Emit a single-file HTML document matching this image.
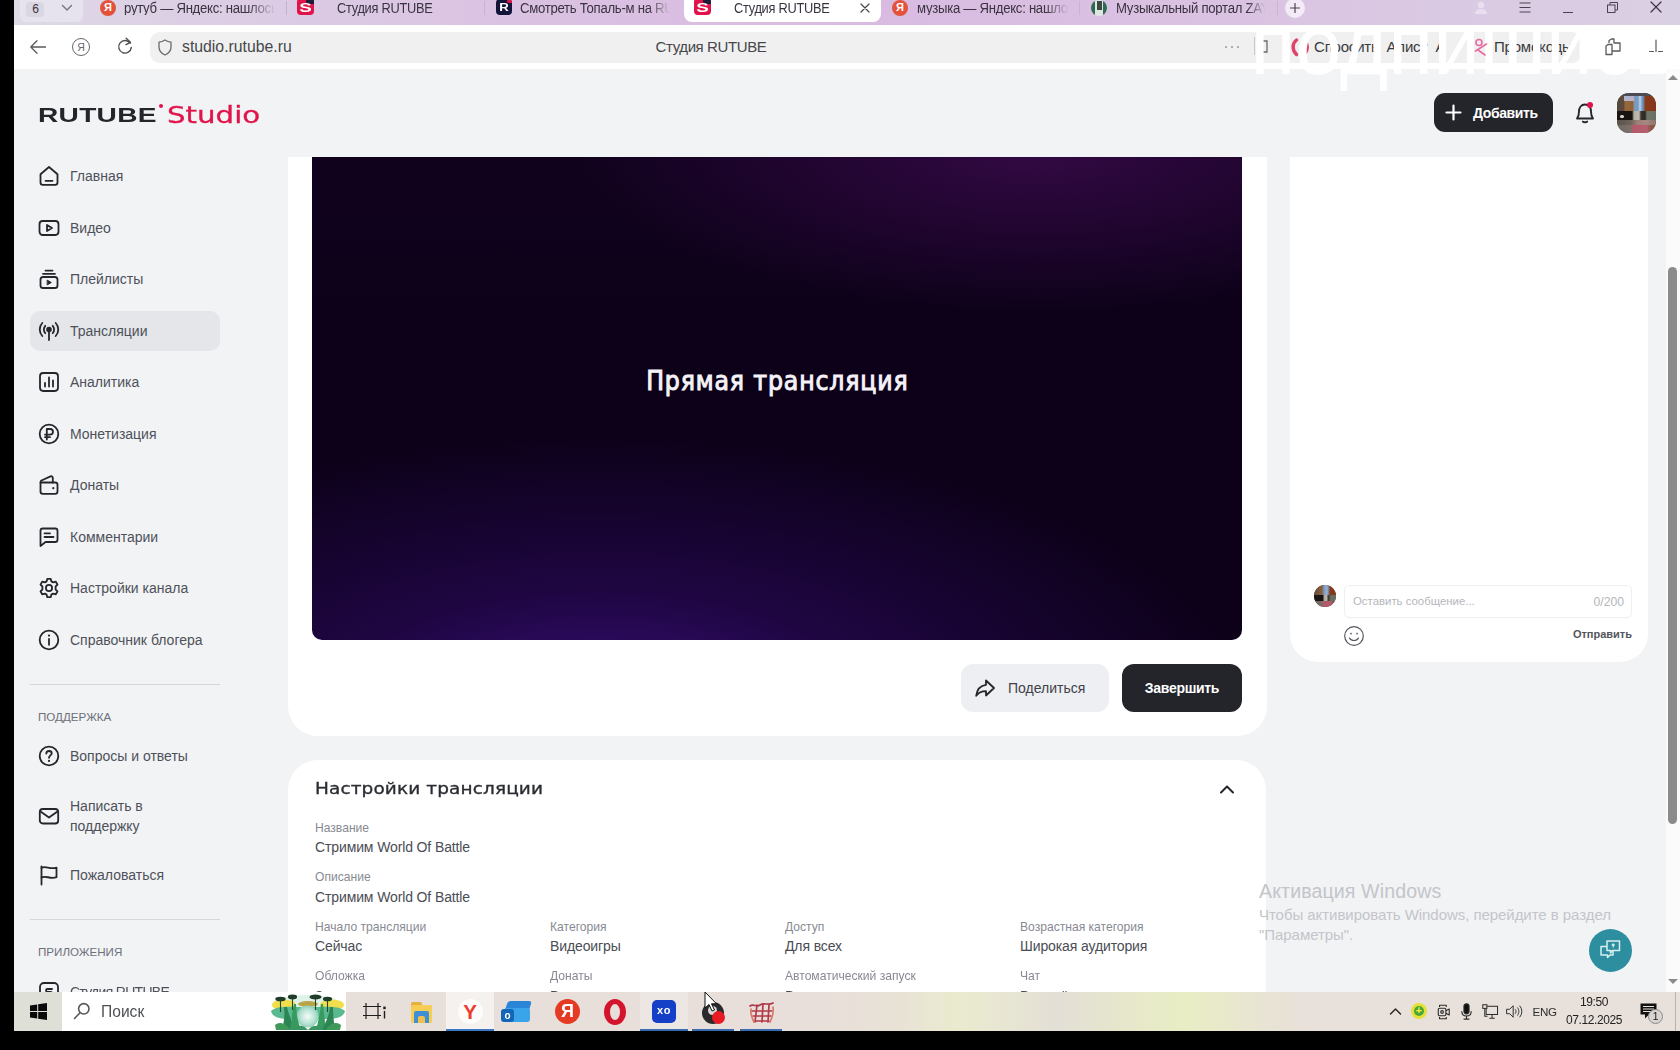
<!DOCTYPE html>
<html lang="ru"><head><meta charset="utf-8"><title>Студия RUTUBE</title>
<style>
*{box-sizing:border-box;margin:0;padding:0}
html,body{width:1680px;height:1050px;overflow:hidden;background:#000;font-family:"Liberation Sans",sans-serif;}
.abs,.abs *{position:absolute}
#screen{position:absolute;left:14px;top:0;width:1666px;height:1031px;background:#f2f3f5;overflow:hidden}
/* everything inside #screen positioned in page coordinates via wrapper shift */
#w{position:absolute;left:-14px;top:0;width:1680px;height:1031px;filter:blur(0.4px)}
#w div,#w span,#w svg{position:absolute}
.t{white-space:nowrap;line-height:1}
/* tab bar */
#tabbar{left:14px;top:0;width:1666px;height:25px;background:linear-gradient(90deg,#dedae6 0%,#dccfe5 10%,#dac1e2 32%,#d9bbe1 52%,#dac2e2 72%,#dad0e3 100%)}
#toolbar{left:14px;top:25px;width:1666px;height:44px;background:#fff}
#urlpill{left:150px;top:32px;width:1432px;height:31px;background:#f0f0f0;border-radius:10px}
.tabt{font-size:14px;color:#3a3340;top:1px;letter-spacing:-0.3px;transform:scaleX(.94);transform-origin:0 0}
/* sidebar */
.nav{font-size:14px;color:#4e515a;left:70px}
.ic{left:37.3px;width:24px;height:24px;fill:none;stroke:#24262c;stroke-width:1.8;stroke-linecap:round;stroke-linejoin:round}
.sec{font-size:11.6px;color:#6d7079;left:38px;letter-spacing:0}
.hr{left:30px;width:190px;height:1px;background:#d5d7db}
/* cards */
.card{background:#fff;border-radius:30px}
.lbl{font-size:12.1px;color:#878a92}
.val{font-size:14px;color:#4a4d55;letter-spacing:-0.12px}
</style></head><body>
<div id="screen"><div id="w">

<!-- ===== browser chrome ===== -->
<div id="tabbar"></div>
<div id="toolbar"></div>
<div id="urlpill"></div>

<!-- ===== page ===== -->
<div id="page" style="left:14px;top:69px;width:1652px;height:923px;background:#f2f3f5"></div>


<!-- ===== browser chrome content ===== -->
<div style="left:20px;top:0;width:63px;height:22px;background:#e6e2ee;border-radius:0 0 6px 6px"></div><div style="left:26px;top:2px;width:18px;height:15px;background:#dad6e2;border-radius:4px"></div>
<div class="t" style="left:21px;width:29px;text-align:center;top:3px;font-size:12px;color:#3a3340">6</div>
<svg style="left:61px;top:4px;width:12px;height:8px" viewBox="0 0 12 8" fill="none" stroke="#7a6f85" stroke-width="1.4" stroke-linecap="round" stroke-linejoin="round"><path d="M1.5 1.5 L6 6 L10.5 1.5"/></svg>
<div style="left:100px;top:0;width:16px;height:16px;border-radius:50%;background:#e5523c"></div><div class="t" style="left:100px;width:16px;text-align:center;top:2px;font-size:11px;font-weight:bold;color:#fff">Я</div>
<div class="t tabt" style="left:124px;width:161px;overflow:hidden;-webkit-mask-image:linear-gradient(90deg,#000 82%,transparent 100%)">рутуб — Яндекс: нашлось</div>
<div style="left:286px;top:1px;width:1px;height:14px;background:#c9b3d2"></div>
<div style="left:297px;top:-2px;width:17px;height:17px;border-radius:4px;background:#e0134a"></div><div style="left:306px;top:-2px;width:8px;height:6px;background:#1b1b3a;border-radius:0 4px 0 3px"></div><div class="t" style="left:297px;width:17px;text-align:center;top:1.8px;font-size:12.5px;font-weight:bold;color:#fff;transform:scaleX(1.5)">S</div>
<div class="t tabt" style="left:337px;transform:scaleX(.915)">Студия RUTUBE</div>
<div style="left:484px;top:1px;width:1px;height:14px;background:#c9b3d2"></div>
<div style="left:496px;top:-1px;width:16px;height:16px;border-radius:4px;background:#14143a"></div><div style="left:507px;top:-1px;width:5px;height:4px;border-radius:0 4px 0 2px;background:#e0134a"></div><div class="t" style="left:496px;width:16px;text-align:center;top:2px;font-size:11px;font-weight:bold;color:#fff;transform:scaleX(1.2)">R</div>
<div class="t tabt" style="left:520px;width:160px;overflow:hidden;-webkit-mask-image:linear-gradient(90deg,#000 85%,transparent 100%)">Смотреть Топаль-м на RU</div>
<div style="left:684px;top:0;width:197px;height:22px;background:#fff;border-radius:0 0 8px 8px"></div>
<div style="left:694px;top:-2px;width:17px;height:17px;border-radius:4px;background:#e0134a"></div><div style="left:703px;top:-2px;width:8px;height:6px;background:#1b1b3a;border-radius:0 4px 0 3px"></div><div class="t" style="left:694px;width:17px;text-align:center;top:1.8px;font-size:12.5px;font-weight:bold;color:#fff;transform:scaleX(1.5)">S</div>
<div class="t tabt" style="left:734px;transform:scaleX(.915)">Студия RUTUBE</div>
<svg style="left:860px;top:3px;width:10px;height:10px" viewBox="0 0 10 10" stroke="#4a4450" stroke-width="1.2" stroke-linecap="round"><path d="M1 1 L9 9 M9 1 L1 9"/></svg>
<div style="left:892px;top:0;width:16px;height:16px;border-radius:50%;background:#e5523c"></div><div class="t" style="left:892px;width:16px;text-align:center;top:2px;font-size:11px;font-weight:bold;color:#fff">Я</div>
<div class="t tabt" style="left:917px;width:161px;overflow:hidden;-webkit-mask-image:linear-gradient(90deg,#000 85%,transparent 100%)">музыка — Яндекс: нашлось</div>
<div style="left:1079px;top:1px;width:1px;height:14px;background:#c9b3d2"></div>
<div style="left:1091px;top:0;width:16px;height:16px;border-radius:50%;background:#dfe6e2;overflow:hidden"><div style="left:0;top:0;width:4px;height:16px;background:#2f6b52"></div><div style="left:12px;top:0;width:4px;height:16px;background:#2f6b52"></div><div style="left:6px;top:1px;width:5px;height:9px;background:#3a4a44"></div></div>
<div class="t tabt" style="left:1116px;width:159px;overflow:hidden;-webkit-mask-image:linear-gradient(90deg,#000 88%,transparent 100%)">Музыкальный портал ZAYCEV</div>
<div style="left:1277px;top:1px;width:1px;height:14px;background:#c9b3d2"></div>
<div style="left:1285px;top:-2px;width:20px;height:20px;border-radius:50%;background:#f3ecf6"></div>
<svg style="left:1290px;top:3px;width:10px;height:10px" viewBox="0 0 10 10" stroke="#4a4450" stroke-width="1.2" stroke-linecap="round"><path d="M5 0.5 V9.5 M0.5 5 H9.5"/></svg>
<svg style="left:1474px;top:0;width:14px;height:15px" viewBox="0 0 14 15" fill="#e9dff0"><circle cx="7" cy="5" r="3.2"/><path d="M1 14 C1 10 4 9 7 9 C10 9 13 10 13 14 Z"/></svg>
<svg style="left:1519px;top:2px;width:12px;height:11px" viewBox="0 0 12 11" stroke="#4a4450" stroke-width="1.1"><path d="M0.5 1 H11.5 M0.5 5.5 H11.5 M0.5 10 H11.5"/></svg>
<div style="left:1563px;top:12px;width:10px;height:1px;background:#4a4450"></div>
<svg style="left:1607px;top:2px;width:11px;height:11px" viewBox="0 0 11 11" fill="none" stroke="#4a4450" stroke-width="1"><rect x="0.5" y="3" width="7.5" height="7.5"/><path d="M3 3 V0.5 H10.5 V8 H8"/></svg>
<svg style="left:1650px;top:1px;width:12px;height:12px" viewBox="0 0 12 12" stroke="#3a3340" stroke-width="1.2" stroke-linecap="round"><path d="M1 1 L11 11 M11 1 L1 11"/></svg>

<svg style="left:29px;top:39px;width:18px;height:16px" viewBox="0 0 18 16" fill="none" stroke="#5a5a5e" stroke-width="1.3" stroke-linecap="round" stroke-linejoin="round"><path d="M16.5 8 H2 M8 1.8 L1.8 8 L8 14.2"/></svg>
<div style="left:72px;top:38px;width:18px;height:18px;border-radius:50%;border:1.4px solid #66666a"></div>
<div class="t" style="left:72px;width:18px;text-align:center;top:42px;font-size:10.5px;color:#66666a">Я</div>
<svg style="left:116px;top:37px;width:18px;height:19px" viewBox="0 0 18 19" fill="none" stroke="#4e4e52" stroke-width="1.4" stroke-linecap="round" stroke-linejoin="round"><path d="M14.2 6.2 A6.3 6.3 0 1 0 15.3 10.4"/><path d="M10.2 1.3 L14.4 5.3 L10 7.6"/></svg>
<svg style="left:158px;top:39px;width:14px;height:17px" viewBox="0 0 14 17" fill="none" stroke="#6a6a6e" stroke-width="1.3" stroke-linejoin="round"><path d="M7 1 C5 2.4 3 3 1 3.1 V8 C1 12 3.8 14.6 7 16 C10.2 14.6 13 12 13 8 V3.1 C11 3 9 2.4 7 1 Z"/></svg>
<div class="t" style="left:182px;top:38.5px;font-size:15.8px;color:#47474b;letter-spacing:0">studio.rutube.ru</div>
<div class="t" style="left:611px;width:200px;text-align:center;top:39px;font-size:15px;color:#47474b;letter-spacing:-0.4px">Студия RUTUBE</div>
<div style="left:1225px;top:46px;width:2.4px;height:2.4px;border-radius:50%;background:#9a9a9e;box-shadow:6px 0 0 #9a9a9e,12px 0 0 #9a9a9e"></div>
<div style="left:1254px;top:37px;width:1px;height:18px;background:#c8c8cc"></div>
<div style="left:1641px;top:33px;width:1px;height:32px;background:#e6e6e8"></div>
<svg style="left:1262px;top:40px;width:6px;height:13px" viewBox="0 0 6 13" fill="none" stroke="#6a6a6e" stroke-width="1.3"><path d="M0.5 1 H5 V12 H0.5"/></svg>
<svg style="left:1290px;top:38px;width:20px;height:19px" viewBox="0 0 20 19" fill="none" stroke="#e04368" stroke-width="3.4" stroke-linecap="round"><path d="M6.5 2 C2 5.5 2 12.5 6.5 16.5"/><path d="M16 4.5 C18 8 17.5 12 15 15.5"/></svg>
<div class="t" style="left:1314px;top:39px;font-size:15px;color:#3a3a3e;letter-spacing:-0.2px">Спросить&nbsp; Алису &nbsp;А</div>
<svg style="left:1474px;top:38px;width:14px;height:18px;z-index:7" viewBox="0 0 14 18" fill="none" stroke="#e86aa0" stroke-width="1.6" stroke-linecap="round"><circle cx="5" cy="4.5" r="3"/><path d="M12.5 6 L1.5 13"/><path d="M4 12 L11 17"/></svg>
<div class="t" style="left:1494px;top:39px;font-size:15px;color:#3a3a3e;letter-spacing:-0.2px">Промокоды</div>
<svg style="left:1604px;top:38px;width:18px;height:18px;z-index:7" viewBox="0 0 18 18" fill="none" stroke="#5a5a5e" stroke-width="1.3" stroke-linejoin="round"><path d="M5 5 V2.5 L7.5 1 H10 V5 H16 V13 H8"/><path d="M2 8 L4 6.5 H8 V16.5 H2 Z"/></svg>
<svg style="left:1648px;top:38px;width:16px;height:16px;z-index:7" viewBox="0 0 16 16" fill="none" stroke="#5a5a5e" stroke-width="1.2" stroke-linecap="round"><path d="M8 2 V10 M1.5 13.5 H5.5 M10.5 13.5 H14.5 M8 10 V13.5"/></svg>
<div class="t" id="sub" style="left:1250.5px;top:4px;font-size:83px;color:#fff;letter-spacing:0;z-index:6">подпишись</div>


<!-- ===== sidebar ===== -->
<div style="left:30px;top:311px;width:190px;height:40px;border-radius:10px;background:#e4e6ea"></div>
<svg class="ic" style="top:164px" viewBox="0 0 24 24"><path d="M3.5 10.2 L12 3 L20.5 10.2 V18.5 C20.5 19.9 19.6 20.8 18.2 20.8 H5.8 C4.4 20.8 3.5 19.9 3.5 18.5 Z"/><path d="M8.5 16.8 H15.5"/></svg><div class="t nav" style="top:169px">Главная</div>
<svg class="ic" style="top:216px" viewBox="0 0 24 24"><rect x="2.5" y="5" width="19" height="14" rx="3.2"/><path d="M10 9 L15 12 L10 15 Z"/></svg><div class="t nav" style="top:221px">Видео</div>
<svg class="ic" style="top:267px" viewBox="0 0 24 24"><rect x="3.5" y="10" width="17" height="11" rx="2.6"/><path d="M6 6.8 H18"/><path d="M8.5 3.6 H15.5"/><path d="M10.5 13.3 L14.3 15.5 L10.5 17.7 Z" fill="#24262c" stroke-width="1"/></svg><div class="t nav" style="top:272px">Плейлисты</div>
<svg class="ic" style="top:319px" viewBox="0 0 24 24"><circle cx="12" cy="10.5" r="1.9" fill="#24262c"/><path d="M12 12.5 V21"/><path d="M8.3 6.8 C6.4 8.8 6.4 12.2 8.3 14.2"/><path d="M15.7 6.8 C17.6 8.8 17.6 12.2 15.7 14.2"/><path d="M5.3 4 C1.9 7.6 1.9 13.4 5.3 17"/><path d="M18.7 4 C22.1 7.6 22.1 13.4 18.7 17"/></svg><div class="t nav" style="top:324px">Трансляции</div>
<svg class="ic" style="top:370px" viewBox="0 0 24 24"><rect x="3" y="3" width="18" height="18" rx="3.2"/><path d="M8 16.5 V13"/><path d="M12 16.5 V7.5"/><path d="M16 16.5 V10.5"/></svg><div class="t nav" style="top:375px">Аналитика</div>
<svg class="ic" style="top:422px" viewBox="0 0 24 24"><circle cx="12" cy="12" r="9.3"/><path d="M9.8 17.5 V7 H13 C14.8 7 16 8.1 16 9.8 C16 11.5 14.8 12.6 13 12.6 H8"/><path d="M8 15.2 H13"/></svg><div class="t nav" style="top:427px">Монетизация</div>
<svg class="ic" style="top:473px" viewBox="0 0 24 24"><path d="M3.5 9.5 H18.2 C19.6 9.5 20.5 10.4 20.5 11.8 V18.5 C20.5 19.9 19.6 20.8 18.2 20.8 H5.8 C4.4 20.8 3.5 19.9 3.5 18.5 Z"/><path d="M3.5 9.5 C3.5 8.3 4 7.6 5 7.2 L13.5 3.4 C14.7 2.9 15.8 3.6 15.8 4.9 V9.5"/><circle cx="16.3" cy="15.2" r="1.1" fill="#24262c" stroke="none"/></svg><div class="t nav" style="top:478px">Донаты</div>
<svg class="ic" style="top:525px" viewBox="0 0 24 24"><path d="M3.5 5.8 C3.5 4.4 4.4 3.5 5.8 3.5 H18.2 C19.6 3.5 20.5 4.4 20.5 5.8 V14.7 C20.5 16.1 19.6 17 18.2 17 H8.5 L3.5 21 Z"/><path d="M7.5 8.3 H13"/><path d="M7.5 12 H16.5"/></svg><div class="t nav" style="top:530px">Комментарии</div>
<svg class="ic" style="top:576px" viewBox="0 0 24 24"><circle cx="12" cy="12" r="3.1"/><path d="M10.3 2.8 H13.7 L14.4 5.4 L16.2 6.4 L18.8 5.7 L20.5 8.6 L18.6 10.5 V13.5 L20.5 15.4 L18.8 18.3 L16.2 17.6 L14.4 18.6 L13.7 21.2 H10.3 L9.6 18.6 L7.8 17.6 L5.2 18.3 L3.5 15.4 L5.4 13.5 V10.5 L3.5 8.6 L5.2 5.7 L7.8 6.4 L9.6 5.4 Z"/></svg><div class="t nav" style="top:581px">Настройки канала</div>
<svg class="ic" style="top:628px" viewBox="0 0 24 24"><circle cx="12" cy="12" r="9.3"/><path d="M12 11 V16.8"/><circle cx="12" cy="7.6" r="1.1" fill="#24262c" stroke="none"/></svg><div class="t nav" style="top:633px">Справочник блогера</div>
<div class="hr" style="top:684px"></div>
<div class="t sec" style="top:711px">ПОДДЕРЖКА</div>
<svg class="ic" style="top:744px" viewBox="0 0 24 24"><circle cx="12" cy="12" r="9.3"/><path d="M9.3 9.6 C9.3 8 10.5 7 12 7 C13.6 7 14.7 8 14.7 9.4 C14.7 11.4 12 11.5 12 13.8"/><circle cx="12" cy="16.9" r="1.1" fill="#24262c" stroke="none"/></svg><div class="t nav" style="top:749px">Вопросы и ответы</div>
<svg class="ic" style="top:804px" viewBox="0 0 24 24"><rect x="2.8" y="5" width="18.4" height="14.5" rx="3"/><path d="M3.5 7.5 L12 13.5 L20.5 7.5"/></svg><div class="t nav" style="top:799px">Написать в</div><div class="t nav" style="top:819px">поддержку</div>
<svg class="ic" style="top:863px" viewBox="0 0 24 24"><path d="M4.5 3.5 V21.5"/><path d="M4.5 4.8 C9 2.6 13 6.8 19.5 4.6 V14.2 C13 16.4 9 12.2 4.5 14.4"/></svg><div class="t nav" style="top:868px">Пожаловаться</div>
<div class="hr" style="top:919px"></div>
<div class="t sec" style="top:946px">ПРИЛОЖЕНИЯ</div>
<svg class="ic" style="top:980px" viewBox="0 0 24 24"><rect x="3" y="3" width="18" height="18" rx="4"/><path d="M15 9 H10.5 C9.4 9 9 9.6 9 10.4 C9 11.3 9.5 11.8 10.5 11.8 H13.5 C14.5 11.8 15 12.4 15 13.3 C15 14.2 14.5 14.8 13.5 14.8 H9"/></svg><div class="t nav" style="top:985px;letter-spacing:-0.7px">Студия RUTUBE</div>


<!-- ===== main column ===== -->
<div class="card" style="left:288px;top:100px;width:978.5px;height:635.7px"></div>
<div id="video" style="left:312px;top:120px;width:930px;height:520px;border-radius:0 0 10px 10px;background:
radial-gradient(ellipse 640px 270px at 31% 112%, rgba(56,14,122,.95), rgba(42,9,92,.6) 42%, rgba(20,2,40,0) 100%),
radial-gradient(ellipse 460px 160px at 78% 6%, rgba(56,10,74,.85), rgba(32,4,48,0) 100%),
linear-gradient(180deg,#11021e 0%,#0c0118 50%,#0d011a 100%)"></div>
<div class="t" style="left:312px;width:930px;top:367.6px;text-align:center;font-family:'DejaVu Sans Condensed','DejaVu Sans','Liberation Sans',sans-serif;font-size:26.3px;color:#f4f2f7;letter-spacing:0.85px;-webkit-text-stroke:0.95px #f4f2f7;padding-left:0.85px">Прямая трансляция</div>

<div style="left:961px;top:664px;width:148px;height:48px;border-radius:12px;background:#eeeff2"></div>
<svg style="left:973px;top:676px;width:24px;height:24px" viewBox="0 0 24 24" fill="none" stroke="#24262c" stroke-width="1.8" stroke-linejoin="round" stroke-linecap="round"><path d="M13 4.5 L21 12 L13 19.5 V15.2 C8.5 15.2 5.5 16.6 3.2 19.8 C3.9 14 7 9.6 13 8.8 Z"/></svg>
<div class="t" style="left:1008px;top:681px;font-size:14px;color:#3f424a">Поделиться</div>
<div style="left:1122px;top:664px;width:120px;height:48px;border-radius:12px;background:#23252b"></div>
<div class="t" style="left:1122px;width:120px;text-align:center;top:681px;font-size:14px;font-weight:bold;color:#fff;letter-spacing:-0.3px">Завершить</div>

<div class="card" style="left:288px;top:760px;width:978px;height:300px"></div>
<div class="t" id="h2" style="left:315px;top:781.2px;font-family:'DejaVu Sans','Liberation Sans',sans-serif;font-size:16.5px;color:#2b2d33;letter-spacing:0.1px;transform-origin:0 0;transform:scaleX(1.12);-webkit-text-stroke:0.35px #2b2d33">Настройки трансляции</div>
<svg style="left:1217px;top:779px;width:20px;height:20px" viewBox="0 0 20 20" fill="none" stroke="#24262c" stroke-width="2" stroke-linecap="round" stroke-linejoin="round"><path d="M4 13.5 L10 7.5 L16 13.5"/></svg>

<div class="t lbl" style="left:315px;top:822px">Название</div>
<div class="t val" style="left:315px;top:840px">Стримим World Of Battle</div>
<div class="t lbl" style="left:315px;top:871px">Описание</div>
<div class="t val" style="left:315px;top:890px">Стримим World Of Battle</div>

<div class="t lbl" style="left:315px;top:921px">Начало трансляции</div>
<div class="t val" style="left:315px;top:939px">Сейчас</div>
<div class="t lbl" style="left:550px;top:921px">Категория</div>
<div class="t val" style="left:550px;top:939px">Видеоигры</div>
<div class="t lbl" style="left:785px;top:921px">Доступ</div>
<div class="t val" style="left:785px;top:939px">Для всех</div>
<div class="t lbl" style="left:1020px;top:921px">Возрастная категория</div>
<div class="t val" style="left:1020px;top:939px">Широкая аудитория</div>

<div class="t lbl" style="left:315px;top:970px">Обложка</div>
<div class="t val" style="left:315px;top:989px">Загружена</div>
<div class="t lbl" style="left:550px;top:970px">Донаты</div>
<div class="t val" style="left:550px;top:989px">Выключены</div>
<div class="t lbl" style="left:785px;top:970px">Автоматический запуск</div>
<div class="t val" style="left:785px;top:989px">Выключен</div>
<div class="t lbl" style="left:1020px;top:970px">Чат</div>
<div class="t val" style="left:1020px;top:989px">Включён</div>


<!-- ===== header (sticky) ===== -->
<div id="hdr" style="left:14px;top:69px;width:1652px;height:87.6px;background:#f2f3f5;z-index:5">
  <div class="t" id="logo1" style="left:24px;top:37px;font-size:19.5px;font-weight:bold;color:#23252b;transform-origin:0 0;transform:scaleX(1.44);letter-spacing:0.2px">RUTUBE</div>
  <div style="left:144.5px;top:34.5px;width:4.6px;height:4.6px;border-radius:50%;background:#e0134a"></div>
  <div class="t" id="logo2" style="left:152.5px;top:35.1px;font-size:22.6px;color:#e0134a;transform-origin:0 0;transform:scaleX(1.295);font-family:'DejaVu Sans','Liberation Sans',sans-serif;-webkit-text-stroke:0.3px #e0134a">Studio</div>

  <div style="left:1420px;top:24px;width:119px;height:39px;border-radius:11px;background:#23252b"></div>
  <svg style="left:1431px;top:35px;width:17px;height:17px" viewBox="0 0 17 17" stroke="#fff" stroke-width="2.2" stroke-linecap="round"><path d="M8.5 1.5V15.5M1.5 8.5H15.5"/></svg>
  <div class="t" style="left:1459px;top:37px;font-size:14px;font-weight:bold;color:#fff;letter-spacing:-0.4px">Добавить</div>
  <svg style="left:1558px;top:30px;width:26px;height:26px" viewBox="0 0 26 26" fill="none" stroke="#24262c" stroke-width="1.9" stroke-linecap="round" stroke-linejoin="round"><path d="M5 19.5 C6.6 17.6 7 16 7 12.5 C7 8.5 9.3 5.5 13 5.5 C16.7 5.5 19 8.5 19 12.5 C19 16 19.4 17.6 21 19.5 Z"/><path d="M10.8 22.6 C11.6 23.4 14.4 23.4 15.2 22.6"/></svg>
  <div style="left:1573.4px;top:32.8px;width:6px;height:6px;border-radius:50%;background:#e0134a"></div>
  <div id="ava" style="left:1603px;top:24px;width:39px;height:39.5px;border-radius:12px;overflow:hidden;background:#6a5a50">
    <div style="left:0;top:0;width:39px;height:20px;background:linear-gradient(90deg,#54473f 0,#5e4a3c 7px,#96683c 8px,#8f6238 16px,#8a96a8 17px,#6e9cd0 21px,#c4d4e4 23px,#6e9cd0 25px,#707880 27px,#8a3a1c 28px,#84361a 39px)"></div>
    <div style="left:7px;top:0;width:10px;height:8px;background:linear-gradient(180deg,#a8b0d0,#b8b4c8)"></div>
    <div style="left:0;top:0;width:39px;height:2.5px;background:#4c4a52"></div>
    <div style="left:0;top:18px;width:39px;height:10px;background:linear-gradient(90deg,#1d1512 0,#15110e 15px,#b4b0a4 17px,#c0bcb0 22px,#3a342c 24px,#2c2822 28px,#70766a 30px,#6a7060 39px)"></div>
    <div style="left:3px;top:22px;width:4px;height:3px;border-radius:2px;background:#d8d4d0"></div>
    <div style="left:0;top:27px;width:39px;height:6px;background:linear-gradient(90deg,#5a504a 0,#6e645c 14px,#9c8078 20px,#a48880 30px,#8a7468 39px)"></div>
    <div style="left:0;top:32px;width:39px;height:8px;background:linear-gradient(90deg,#6e6862 0,#7a726a 14px,#b25a6a 15px,#b65e70 30px,#8c5a4c 33px,#865444 39px)"></div>
  </div>
</div>

<!-- ===== chat ===== -->
<div class="card" style="left:1290px;top:100px;width:358px;height:562px;border-radius:28px"></div>
<div style="left:1314px;top:585px;width:22px;height:22px;border-radius:50%;overflow:hidden;background:#5a4a44"><div style="left:0;top:0;width:22px;height:10px;background:linear-gradient(90deg,#5e4c40 0,#8a6038 8px,#7a98c4 10px,#9ab4d4 13px,#6a7480 15px,#8a3a1c 16px,#84361a 22px)"></div><div style="left:0;top:10px;width:22px;height:6px;background:linear-gradient(90deg,#1d1512 0,#18120f 9px,#aaa69a 10px,#b8b4a8 13px,#38322a 14px,#6a7060 17px,#6a7060 22px)"></div><div style="left:0;top:16px;width:22px;height:6px;background:linear-gradient(90deg,#6e645c 0,#787068 8px,#b05868 9px,#b25c6c 17px,#8a5848 19px,#865444 22px)"></div></div>
<div style="left:1344px;top:585px;width:288px;height:33px;border:1px solid #efeff1;border-radius:5px;background:#fff"></div>
<div class="t" style="left:1353px;top:596px;font-size:11.4px;color:#b4b6bb">Оставить сообщение...</div>
<div class="t" style="left:1580px;width:44px;text-align:right;top:596px;font-size:12.2px;color:#b4b6bb">0/200</div>
<svg style="left:1343px;top:625px;width:22px;height:22px" viewBox="0 0 22 22" fill="none" stroke="#55575d" stroke-width="1.2" stroke-linecap="round"><circle cx="11" cy="11" r="9.3"/><path d="M6.5 13 C8 16.3 14 16.3 15.5 13"/><circle cx="8" cy="8.6" r="0.9" fill="#55575d" stroke="none"/><circle cx="14" cy="8.6" r="0.9" fill="#55575d" stroke="none"/></svg>
<div class="t" style="left:1540px;width:92px;text-align:right;top:629px;font-size:11px;font-weight:bold;color:#53555b">Отправить</div>


<!-- ===== overlays ===== -->
<div style="left:1666px;top:69px;width:14px;height:923px;background:#fbfbfb;z-index:7"></div>
<div style="left:1668px;top:267px;width:9px;height:557px;border-radius:5px;background:#8b8b8b;z-index:7"></div>
<div style="left:1667.5px;top:75px;width:0;height:0;border-left:5px solid transparent;border-right:5px solid transparent;border-bottom:5px solid #8b8b8b;z-index:7"></div>
<div style="left:1667.5px;top:979px;width:0;height:0;border-left:5px solid transparent;border-right:5px solid transparent;border-top:5px solid #8b8b8b;z-index:7"></div>
<div class="t" style="left:1259px;top:882px;font-size:19.6px;color:#c3c5ca;letter-spacing:0.1px;z-index:6">Активация Windows</div>
<div class="t" style="left:1259px;top:907px;font-size:15px;color:#c3c5ca;letter-spacing:-0.05px;z-index:6">Чтобы активировать Windows, перейдите в раздел</div>
<div class="t" style="left:1259px;top:927px;font-size:15px;color:#c3c5ca;letter-spacing:-0.05px;z-index:6">"Параметры".</div>
<div style="left:1589px;top:929px;width:43px;height:43px;border-radius:50%;background:#2c8e9e;z-index:6"></div>
<svg style="left:1598px;top:938px;width:25px;height:24px;z-index:6" viewBox="0 0 25 24" fill="none" stroke="#d8f0f2" stroke-width="1.5" stroke-linejoin="round"><path d="M9 3 H21.5 V12.5 H14.5 L12.5 15 V12.5 H9 Z" fill="#2c8e9e"/><path d="M9 8.5 H3 V17 H9.5 V19.5 L12 17 H15 V12.5"/><path d="M15.2 9.5 V6.2 M13.8 7.4 L15.2 6 L16.6 7.4" stroke-width="1.2"/></svg>


<!-- ===== taskbar ===== -->
<div id="tb" style="left:14px;top:992px;width:1666px;height:39px;z-index:9;background:linear-gradient(90deg,#e7dfdb 0%,#e8dfda 48%,#e8e2d6 53.2%,#ebebcf 56.6%,#e3dfd6 62.7%,#e6e6cc 66.4%,#e9eec4 70.1%,#e8e4d2 74.8%,#e8e0da 77.5%,#e8e0da 100%)">
 <div style="left:0;top:0;width:48px;height:39px;background:#dedfd6"></div>
 <svg style="left:16px;top:11px;width:17px;height:17px" viewBox="0 0 17 17" fill="#0b0b0b"><path d="M0 2.4 L7.2 1.4 V8 H0 Z M8.2 1.25 L17 0 V8 H8.2 Z M0 9 H7.2 V15.6 L0 14.6 Z M8.2 9 H17 V17 L8.2 15.75 Z"/></svg>
 <div style="left:48px;top:0;width:284px;height:39px;background:#fff"></div>
 <svg style="left:58px;top:9px;width:20px;height:20px" viewBox="0 0 20 20" fill="none" stroke="#55575b" stroke-width="1.6" stroke-linecap="round"><circle cx="11.8" cy="7.8" r="5.2"/><path d="M8 11.8 L2.5 17.5"/></svg>
 <div class="t" style="left:87px;top:11.8px;font-size:15.6px;color:#4f5155;letter-spacing:0">Поиск</div>
 <svg id="plants" style="left:256px;top:0;width:76px;height:39px" viewBox="0 0 76 39">
  <defs><radialGradient id="pg" cx="50%" cy="50%" r="50%"><stop offset="0" stop-color="#f4fbf8"/><stop offset="0.6" stop-color="#bfe6d8"/><stop offset="1" stop-color="#8fd0b8"/></radialGradient></defs>
  <ellipse cx="38" cy="10" rx="30" ry="7" fill="#dff2ea"/>
  <ellipse cx="14" cy="13" rx="12" ry="5.5" fill="#f0de4c"/>
  <ellipse cx="62" cy="13" rx="12" ry="5.5" fill="#f0de4c"/>
  <ellipse cx="38" cy="12" rx="10" ry="3" fill="#b9a545"/>
  <path d="M1 19 C8 13 20 15 38 15 C56 15 68 13 75 19 C74 25 66 27 58 27 L18 27 C10 27 2 25 1 19 Z" fill="#5bb98f"/>
  <circle cx="37.6" cy="24.5" r="11" fill="url(#pg)"/>
  <path d="M12 38 C14 30 15 24 14 15 L17 15 C19 24 22 30 27 38 Z" fill="#2c8552"/>
  <path d="M20 38 C21 30 22 22 24 12 L26 12 C26 22 28 30 31 38 Z" fill="#379a5e"/>
  <path d="M46 38 C48 30 50 22 51 12 L53 12 C54 22 55 30 56 38 Z" fill="#379a5e"/>
  <path d="M52 38 C56 30 59 24 60 15 L63 15 C63 24 64 30 65 38 Z" fill="#2c8552"/>
  <path d="M5 33 C9 29 16 31 20 38 L6 38 Z M71 33 C67 29 60 31 56 38 L70 38 Z" fill="#3f9a5a"/>
  <path d="M22 38 C27 32 34 33 38 38 C42 33 49 32 54 38 Z" fill="#3b9560"/>
  <path d="M10.5 8 V20 M22.5 6 V18 M45.5 6 V18 M57.5 8 V20" stroke="#23482f" stroke-width="1.1"/>
  <ellipse cx="10.5" cy="7" rx="5.2" ry="2.3" fill="#1f3d2a"/>
  <ellipse cx="22.5" cy="5" rx="4.6" ry="2.4" fill="#1f3d2a"/>
  <ellipse cx="45.5" cy="5" rx="6" ry="2.4" fill="#1f3d2a"/>
  <ellipse cx="57.5" cy="7" rx="4.6" ry="2.3" fill="#1f3d2a"/>
 </svg>
 <svg style="left:347px;top:10px;width:26px;height:19px" viewBox="0 0 26 19" fill="none" stroke="#1e1e1e" stroke-width="1.2"><path d="M5 1 V17 M17 1 V17 M2 4.5 H20 M2 13.5 H20"/><path d="M23.5 9 V16.5" stroke-width="1.4"/><rect x="22.3" y="4.6" width="2.4" height="2.6" fill="#1e1e1e" stroke="none"/></svg>
 <div style="left:397px;top:10px;width:11px;height:5px;border-radius:2px 2px 0 0;background:#e3b13f"></div>
 <div style="left:397px;top:12.5px;width:21px;height:18px;border-radius:1.5px;background:#f6cd55"></div>
 <div style="left:400px;top:19px;width:15px;height:11.5px;border-radius:2px 2px 0 0;background:#3f8fd8"></div>
 <div style="left:404px;top:24px;width:7px;height:6.5px;border-radius:2px 2px 0 0;background:#f2c04a"></div>
 <div style="left:432px;top:0;width:48px;height:39px;background:#f5f1ee"></div>
 <div style="left:432px;top:37px;width:48px;height:2px;background:#3a78c4"></div>
 <div style="left:444px;top:7px;width:25px;height:25px;border-radius:50%;background:#fdfcfb"></div>
 <div class="t" style="left:443px;width:26px;text-align:center;top:10px;font-size:20.5px;font-weight:bold;color:#ee3b2e">Y</div>
 <div style="left:492px;top:9px;width:24px;height:12px;border-radius:3px;background:#2a84d8;transform:skewX(-18deg)"></div>
 <div style="left:490px;top:16px;width:26px;height:14px;border-radius:3px;background:#3aa4ea"></div>
 <div style="left:487px;top:17px;width:13px;height:13px;border-radius:3px;background:#1464b8"></div>
 <div class="t" style="left:487px;width:13px;text-align:center;top:19px;font-size:10px;font-weight:bold;color:#fff">o</div>
 <div style="left:541px;top:7px;width:25px;height:25px;border-radius:50%;background:#e53a24"></div>
 <div class="t" style="left:541px;width:25px;text-align:center;top:10px;font-size:18px;font-weight:bold;color:#fff">Я</div>
 <div style="left:590px;top:7px;width:22px;height:26px;border-radius:50%;border:5.5px solid #d4142c;border-left-width:6.5px;border-right-width:6.5px"></div>
 <div style="left:626px;top:0;width:48px;height:39px;background:#ede7e3"></div>
 <div style="left:626px;top:37px;width:48px;height:2px;background:#3a6cb0"></div>
 <div style="left:638px;top:8px;width:24px;height:23px;border-radius:5px;background:#1440c8"></div>
 <div class="t" style="left:638px;width:24px;text-align:center;top:13px;font-size:11px;font-weight:bold;color:#fff;letter-spacing:0.5px">xo</div>
 <div style="left:678px;top:37px;width:42px;height:2px;background:#3a6cb0"></div>
 <div style="left:726px;top:37px;width:42px;height:2px;background:#3a6cb0"></div>
 <div style="left:688px;top:10px;width:22px;height:22px;border-radius:50%;background:#2a2a2c"></div>
 <div style="left:694px;top:14px;width:9px;height:9px;border-radius:50%;background:#d8d8d8"></div>
 <div style="left:698px;top:19px;width:13px;height:13px;border-radius:50%;background:#e81a24"></div>
 <svg style="left:690px;top:-1px;width:14px;height:22px" viewBox="0 0 14 22"><path d="M1 1 V17 L5 13.5 L8 20 L10.5 19 L7.5 12.8 H12.5 Z" fill="#fff" stroke="#111" stroke-width="1"/></svg>
 <svg style="left:734px;top:8px;width:28px;height:24px" viewBox="0 0 28 24" fill="none" stroke="#b03a4a" stroke-width="1.7" stroke-linecap="round"><path d="M2 6 C6 3 8 8 12 5 C16 2 20 6 25 3"/><path d="M4 11 H24 M5 16 H23 M7 21 H21"/><path d="M9 5 L7 22 M15 4 L14 22 M21 5 L20 22"/><path d="M3 9 C2 14 4 18 6 22 M25 7 C26 13 24 18 22 22" stroke="#d87a6a"/></svg>

 <svg style="left:1375px;top:15px;width:13px;height:9px" viewBox="0 0 13 9" fill="none" stroke="#2a2a2a" stroke-width="1.5" stroke-linecap="round" stroke-linejoin="round"><path d="M1.5 7 L6.5 2 L11.5 7"/></svg>
 <div style="left:1397px;top:11px;width:16px;height:16px;border-radius:50%;background:#e6e03a"></div>
 <div style="left:1400px;top:14px;width:10px;height:10px;border-radius:50%;background:#4aa63a"></div>
 <div class="t" style="left:1400px;width:10px;text-align:center;top:13px;font-size:11px;font-weight:bold;color:#f4f03a">+</div>
 <svg style="left:1423px;top:11.5px;width:13.5px;height:16px" viewBox="0 0 16 19" fill="none" stroke="#2a2a2a" stroke-width="1.3" stroke-linejoin="round"><path d="M3 3.5 V1.5 H11 V3.5 M3 15.5 V17.5 H11 V15.5"/><rect x="1.5" y="5" width="9" height="9" rx="1.5"/><path d="M10.5 8 L14.5 6 V13 L10.5 11"/><circle cx="6" cy="9.5" r="1.6"/></svg>
 <svg style="left:1447px;top:11px;width:11px;height:17px" viewBox="0 0 13 20" fill="none" stroke="#2a2a2a" stroke-width="1.3" stroke-linecap="round"><rect x="3.5" y="0.8" width="6" height="12" rx="3" fill="#111"/><path d="M1 10 C1 17 12 17 12 10 M6.5 15.5 V19 M3.5 19 H9.5"/></svg>
 <svg style="left:1468px;top:12px;width:16.5px;height:15.5px" viewBox="0 0 18 17" fill="none" stroke="#2a2a2a" stroke-width="1.1"><rect x="4.5" y="2.5" width="12.5" height="9"/><path d="M8 15.5 H14 M11 11.5 V15.5"/><rect x="0.8" y="0.8" width="4.5" height="4" fill="#e8e0da"/><path d="M3 5 V13.5 H6"/></svg>
 <svg style="left:1492px;top:12px;width:17px;height:15px" viewBox="0 0 19 17" fill="none" stroke="#2a2a2a" stroke-width="1.1" stroke-linejoin="round" stroke-linecap="round"><path d="M1 6 H4 L8 2 V15 L4 11 H1 Z"/><path d="M10.5 6.3 C11.6 7.6 11.6 9.4 10.5 10.7"/><path d="M13 4.3 C15 6.6 15 10.4 13 12.7"/><path d="M15.5 2.3 C18.6 5.6 18.6 11.4 15.5 14.7"/></svg>
 <div class="t" style="left:1518.5px;top:13.5px;font-size:11.6px;color:#2c2c2c;letter-spacing:-0.3px">ENG</div>
 <div class="t" style="left:1540px;width:80px;text-align:center;top:4px;font-size:12px;color:#222;letter-spacing:-0.4px">19:50</div>
 <div class="t" style="left:1540px;width:80px;text-align:center;top:22px;font-size:12px;color:#222;letter-spacing:-0.4px">07.12.2025</div>
 <svg style="left:1626px;top:11px;width:17px;height:16px" viewBox="0 0 17 16" fill="#111"><path d="M0.5 0.5 H16.5 V11.5 H9 L5 15.5 V11.5 H0.5 Z"/><path d="M3 3.5 H14 M3 6 H14 M3 8.5 H14" stroke="#e8e0da" stroke-width="1"/></svg>
 <div style="left:1634px;top:17px;width:15px;height:15px;border-radius:50%;background:#d9d5d2;border:1px solid #8a8a8a"></div>
 <div class="t" style="left:1634px;width:15px;text-align:center;top:19px;font-size:11px;color:#222">1</div>
 <div style="left:1661px;top:0;width:1px;height:39px;background:#b9b2ad"></div>
</div>


</div></div>
</body></html>
